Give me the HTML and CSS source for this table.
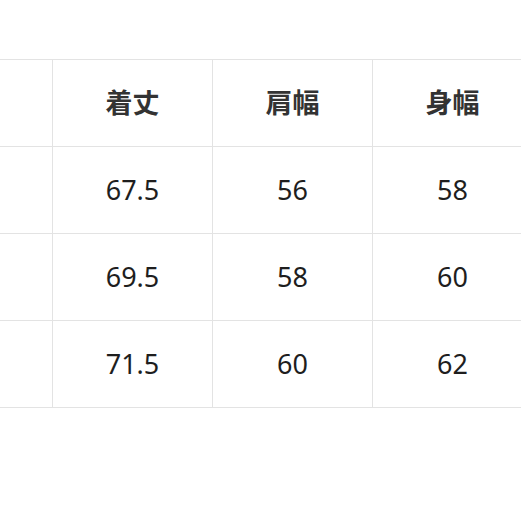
FILE: index.html
```html
<!DOCTYPE html>
<html lang="ja">
<head>
<meta charset="utf-8">
<link rel="stylesheet" href="styles.css">
</head>
<body>
<div class="wrap">
  <div class="table">
    <div class="cell"></div><div class="cell head">着丈</div><div class="cell head">肩幅</div><div class="cell head">身幅</div>
    <div class="cell"></div><div class="cell">67.5</div><div class="cell">56</div><div class="cell">58</div>
    <div class="cell"></div><div class="cell">69.5</div><div class="cell">58</div><div class="cell">60</div>
    <div class="cell"></div><div class="cell">71.5</div><div class="cell">60</div><div class="cell">62</div>
  </div>
</div>
</body>
</html>
```
FILE: styles.css
```css
html, body {
  margin: 0;
  padding: 0;
  background: #ffffff;
}
.wrap {
  width: 521px;
  height: 521px;
  overflow: hidden;
  padding-top: 59px;
  box-sizing: border-box;
}
.table {
  display: grid;
  grid-template-columns: 53px 160px 160px 160px;
  grid-auto-rows: 87px;
  width: 533px;
  border-top: 1px solid #e3e3e3;
}
.cell {
  box-sizing: border-box;
  border-right: 1px solid #e3e3e3;
  border-bottom: 1px solid #e3e3e3;
  display: flex;
  align-items: center;
  justify-content: center;
  font-family: "Noto Sans", "Noto Sans CJK JP", sans-serif;
  font-size: 27px;
  color: #1e1e1e;
  padding-bottom: 2px;
}
.head {
  font-family: "Noto Sans CJK JP", sans-serif;
  font-weight: 700;
  color: #333333;
  padding-bottom: 3px;
}
```
